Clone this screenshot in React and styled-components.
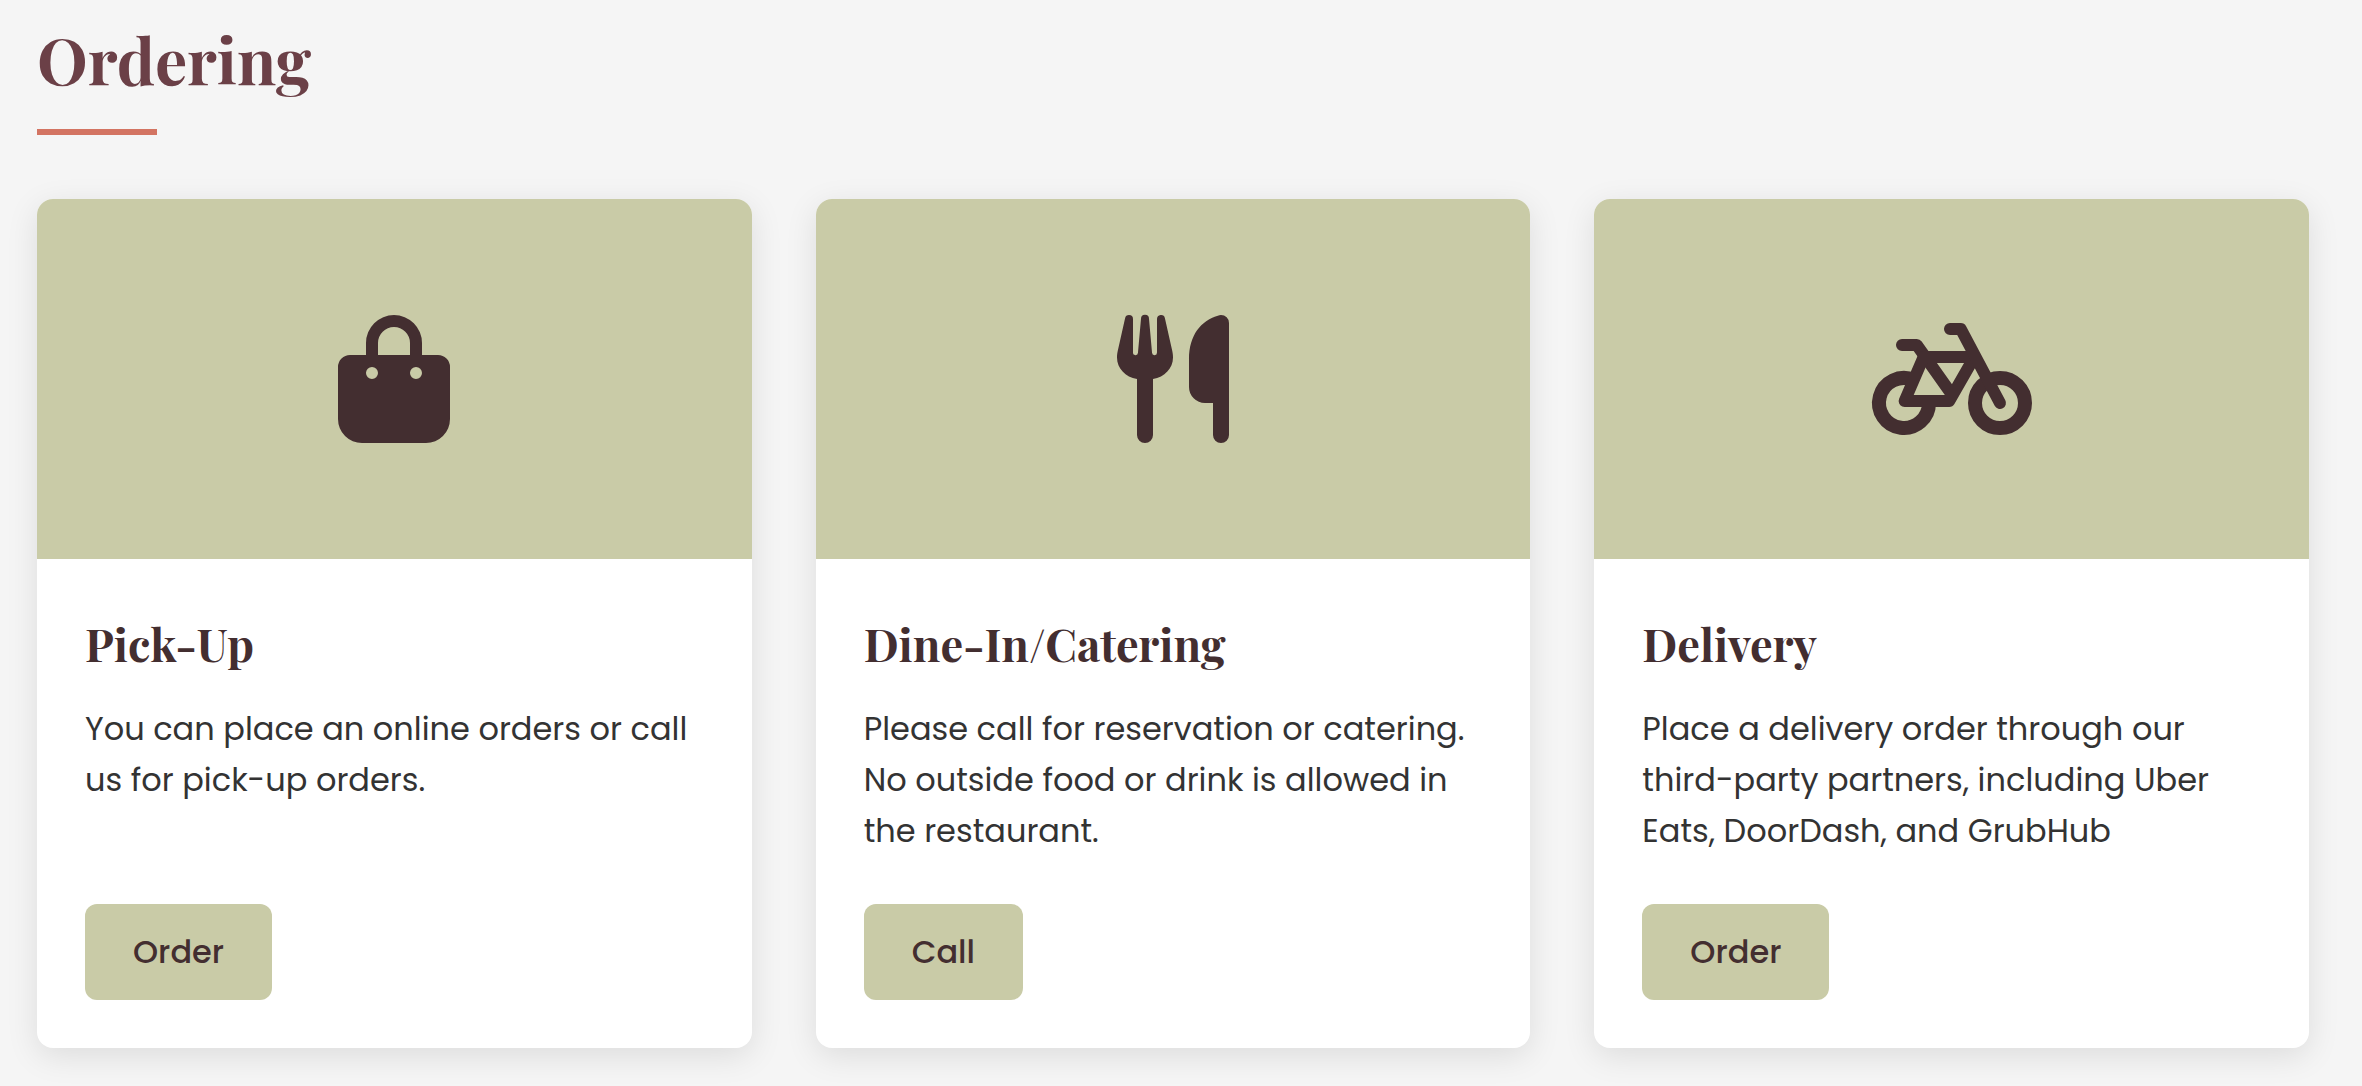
import React from "react";
import styled, { createGlobalStyle } from "styled-components";

const color = {
  page: "#f5f5f5",
  card: "#ffffff",
  sage: "#c9cba7",
  wine: "#6b4047",
  bark: "#432e30",
  coral: "#d37462",
  text: "#333333",
};

const serif = `"Playfair Display", "Liberation Serif", serif`;
const sans = `Poppins, Inter, sans-serif`;

const GlobalStyle = createGlobalStyle`
  *, *::before, *::after { box-sizing: border-box; }
  body {
    margin: 0;
    background: ${color.page};
    color: ${color.text};
    font-family: ${sans};
    font-size: 32px;
  }
`;

const Section = styled.section`
  padding: 16px 53px 38px 37px;
`;

const SectionTitle = styled.h2`
  margin: 0;
  color: ${color.wine};
  font-family: ${serif};
  font-size: 64px;
  font-weight: 700;
  line-height: 85px;

  &::after {
    content: "";
    display: block;
    width: 120px;
    height: 6px;
    margin-top: 28px;
    background: ${color.coral};
  }
`;

const CardGrid = styled.div`
  display: grid;
  grid-template-columns: repeat(3, minmax(0, 1fr));
  gap: 64px;
  margin-top: 64px;
`;

const Card = styled.article`
  display: flex;
  flex-direction: column;
  overflow: hidden;
  border-radius: 16px;
  background: ${color.card};
  box-shadow: 0 8px 32px rgba(0, 0, 0, 0.1);
`;

const CardBanner = styled.div`
  display: flex;
  align-items: center;
  justify-content: center;
  height: 360px;
  background: ${color.sage};
  color: ${color.bark};
`;

const Icon = styled.svg`
  width: 160px;
  height: 160px;
  overflow: visible;
`;

const CardBody = styled.div`
  display: flex;
  flex: 1;
  flex-direction: column;
  align-items: flex-start;
  padding: 48px;
`;

const CardTitle = styled.h3`
  margin: 0 0 24px;
  color: ${color.bark};
  font-family: ${serif};
  font-size: 45px;
  font-weight: 700;
  line-height: 72px;
`;

const CardText = styled.p`
  margin: 0 0 48px;
  line-height: 51px;
`;

const CardButton = styled.button`
  height: 96px;
  margin-top: auto;
  padding: 0 48px;
  border: 0;
  border-radius: 12px;
  background: ${color.sage};
  color: ${color.bark};
  font-family: inherit;
  font-size: 32px;
  font-weight: 500;
  cursor: pointer;
`;

const BagIcon = () => (
  <Icon viewBox="0 0 20 20" fill="currentColor" fillRule="evenodd" aria-hidden="true">
    <path d="M6.5 7V5.5a3.5 3.5 0 0 1 7 0V7h2A1.5 1.5 0 0 1 17 8.5V15a3 3 0 0 1-3 3H6a3 3 0 0 1-3-3V8.5A1.5 1.5 0 0 1 4.5 7h2ZM8 7h4V5.5a2 2 0 1 0-4 0V7Zm-.75 3a.75.75 0 1 0 0-1.5.75.75 0 0 0 0 1.5Zm5.5 0a.75.75 0 1 0 0-1.5.75.75 0 0 0 0 1.5Z" />
  </Icon>
);

const CutleryIcon = () => (
  <Icon viewBox="0 0 20 20" fill="currentColor" aria-hidden="true">
    <path d="M4.5 2a.5.5 0 0 1 .5.5v4.2a.31.31 0 0 0 .62.02L6 2.47a.5.5 0 0 1 1 0l.38 4.25A.31.31 0 0 0 8 6.7V2.5a.5.5 0 0 1 .99-.1l.92 4.1c.06.3.09.5.09.8 0 1.35-1.05 2.45-2.5 2.7v7a1 1 0 1 1-2 0v-7C4.05 9.75 3 8.65 3 7.3c0-.3.03-.5.09-.8l.92-4.1A.5.5 0 0 1 4.5 2Z" />
    <path d="M16 2a1 1 0 0 1 1 1v14a1 1 0 1 1-2 0v-4h-1a2 2 0 0 1-2-2V7.5c0-3 1.5-4.8 3.6-5.42.13-.05.26-.08.4-.08Z" />
  </Icon>
);

const BicycleIcon = () => (
  <Icon
    viewBox="0 0 20 20"
    fill="none"
    stroke="currentColor"
    strokeWidth="1.5"
    strokeLinejoin="round"
    aria-hidden="true"
  >
    <path d="M7.125 13a3.125 3.125 0 1 1-1.925-2.885" strokeWidth="1.75" />
    <circle cx="16" cy="13" r="3.125" strokeWidth="1.75" />
    <path d="M3.75 5.75H5.6L9.85 11.75" strokeLinecap="round" />
    <path d="M12.8 7.25H6.45L4.08 12.75H9.65L12.8 7.25Z" />
    <path d="M9.75 3.75H11.1L16 13" strokeLinecap="round" />
  </Icon>
);

const options = [
  {
    title: "Pick-Up",
    text: "You can place an online orders or call us for pick-up orders.",
    action: "Order",
    Glyph: BagIcon,
  },
  {
    title: "Dine-In/Catering",
    text: "Please call for reservation or catering. No outside food or drink is allowed in the restaurant.",
    action: "Call",
    Glyph: CutleryIcon,
  },
  {
    title: "Delivery",
    text: "Place a delivery order through our third-party partners, including Uber Eats, DoorDash, and GrubHub",
    action: "Order",
    Glyph: BicycleIcon,
  },
];

export default function App() {
  return (
    <>
      <GlobalStyle />
      <Section>
        <SectionTitle>Ordering</SectionTitle>
        <CardGrid>
          {options.map(({ title, text, action, Glyph }) => (
            <Card key={title}>
              <CardBanner>
                <Glyph />
              </CardBanner>
              <CardBody>
                <CardTitle>{title}</CardTitle>
                <CardText>{text}</CardText>
                <CardButton type="button">{action}</CardButton>
              </CardBody>
            </Card>
          ))}
        </CardGrid>
      </Section>
    </>
  );
}
